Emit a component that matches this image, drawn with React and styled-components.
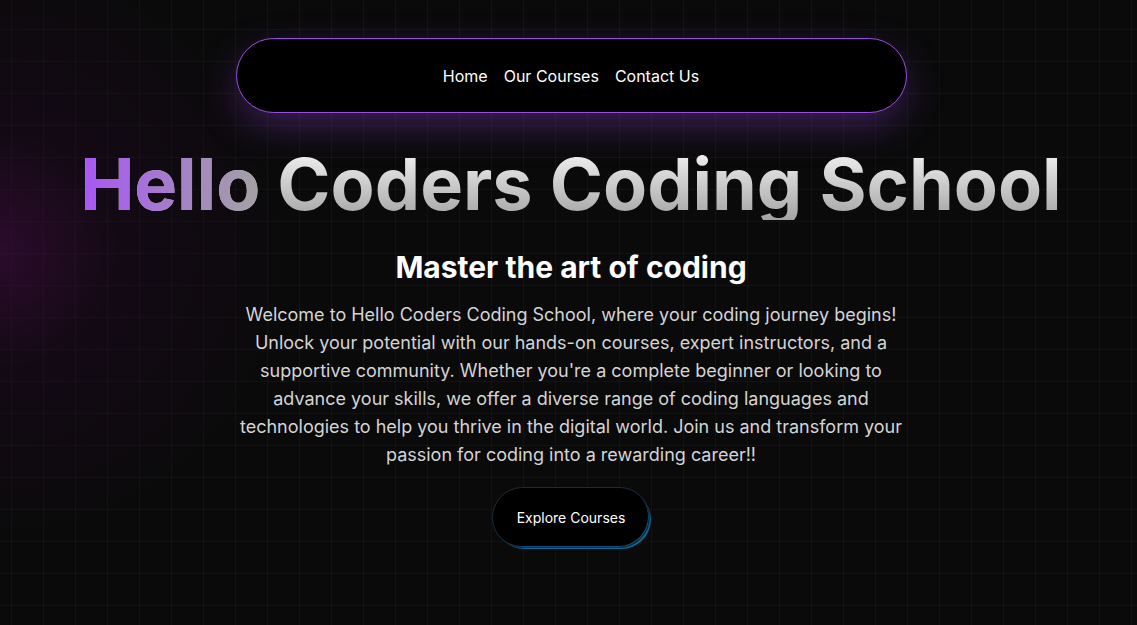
import React from 'react'
import styled, { createGlobalStyle } from 'styled-components'

const GlobalStyle = createGlobalStyle`
  html, body {
    margin: 0;
    padding: 0;
    background: #0a0a0a;
  }
  * {
    box-sizing: border-box;
  }
`

const Page = styled.div`
  position: relative;
  min-height: 625px;
  overflow: hidden;
  display: flex;
  flex-direction: column;
  align-items: center;
  padding: 38px 0 0 5px;
  font-family: Inter, 'Noto Sans', sans-serif;
  background-color: #0a0a0a;
  background-image:
    radial-gradient(circle at 0px 250px, rgba(70, 12, 70, 0.55) 0px, rgba(40, 8, 45, 0.3) 120px, rgba(10, 10, 10, 0) 300px),
    linear-gradient(to right, rgba(255, 255, 255, 0.03) 1px, transparent 1px),
    linear-gradient(to bottom, rgba(255, 255, 255, 0.03) 1px, transparent 1px);
  background-size: 100% 100%, 32px 32px, 32px 32px;
  background-position: 0 0, 11px 29px, 11px 29px;
`

const Nav = styled.nav`
  width: 671px;
  height: 75px;
  display: flex;
  justify-content: center;
  align-items: center;
  gap: 16px;
  background: #000;
  border: 1px solid #9b4fe0;
  border-radius: 999px;
  box-shadow: 0 14px 40px -4px rgba(130, 60, 200, 0.45);
`

const NavLink = styled.a`
  color: #fff;
  font-size: 16px;
  text-decoration: none;
`

const Title = styled.h1`
  margin: 35px 0 0;
  font-size: 72px;
  line-height: 1;
  font-weight: 700;
  letter-spacing: 0;
  background: linear-gradient(to bottom, #f5f5f5, #a3a3a3);
  -webkit-background-clip: text;
  background-clip: text;
  color: transparent;
`

const Accent = styled.span`
  background: linear-gradient(to right, #a855f7, #a3a3a3);
  -webkit-background-clip: text;
  background-clip: text;
  color: transparent;
`

const Subtitle = styled.h2`
  margin: 29px 0 0;
  font-size: 30px;
  line-height: 36px;
  font-weight: 700;
  color: #fff;
`

const Lead = styled.p`
  margin: 16px 0 0;
  max-width: 672px;
  font-size: 18px;
  line-height: 28px;
  color: #d4d4d4;
  text-align: center;
`

const CtaButton = styled.button`
  margin-top: 18px;
  width: 158px;
  height: 61px;
  border-radius: 999px;
  background: #000;
  color: #fff;
  font-family: inherit;
  font-size: 14px;
  border: 1px solid #1e2a3a;
  box-shadow: inset -1px -1px 0 0 rgba(14, 130, 200, 0.6), 2px 2px 0 -1px rgba(14, 140, 210, 0.7);
  cursor: pointer;
`

const App = () => {
  return (
    <>
      <GlobalStyle />
      <Page>
        <Nav>
          <NavLink href="#">Home</NavLink>
          <NavLink href="#">Our Courses</NavLink>
          <NavLink href="#">Contact Us</NavLink>
        </Nav>
        <Title>
          <Accent>Hello</Accent> Coders Coding School
        </Title>
        <Subtitle>Master the art of coding</Subtitle>
        <Lead>
          Welcome to Hello Coders Coding School, where your coding journey begins! Unlock your
          potential with our hands-on courses, expert instructors, and a supportive community.
          Whether you're a complete beginner or looking to advance your skills, we offer a diverse
          range of coding languages and technologies to help you thrive in the digital world. Join
          us and transform your passion for coding into a rewarding career!!
        </Lead>
        <CtaButton>Explore Courses</CtaButton>
      </Page>
    </>
  )
}

export default App
